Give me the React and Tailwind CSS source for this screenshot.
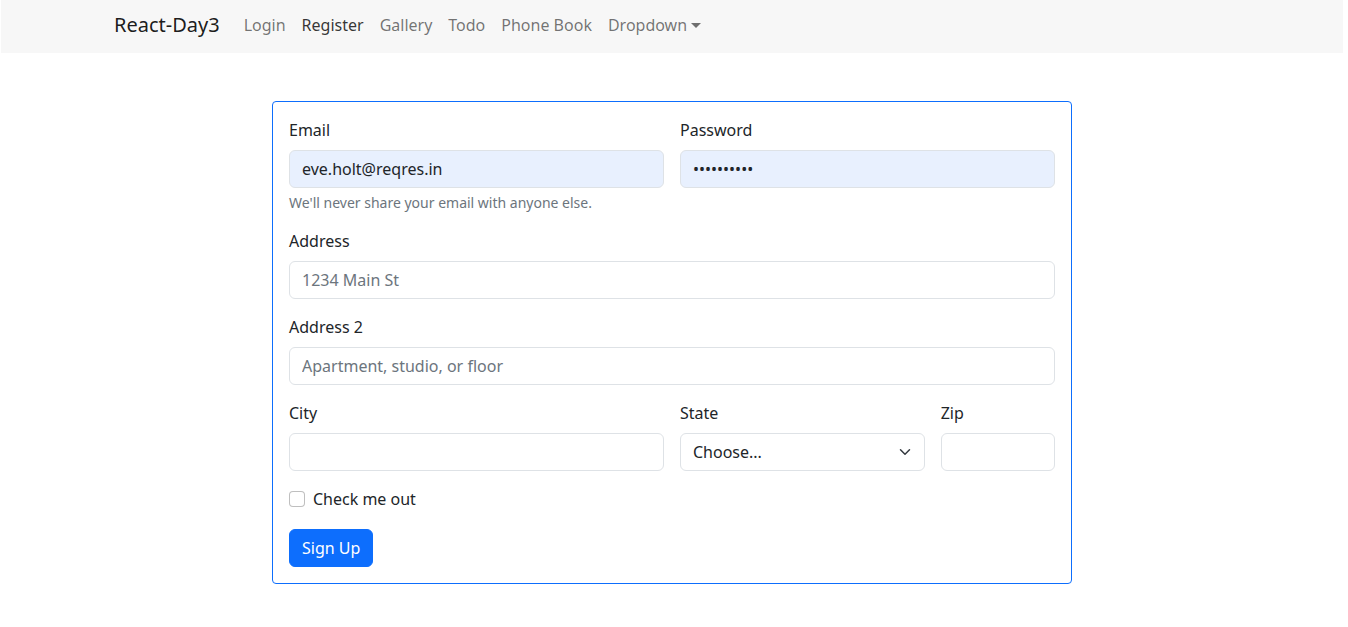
import React from "react";

function Label({ children }) {
  return <label className="mb-2 block text-[16px] leading-6 text-[#212529]">{children}</label>;
}

function Field({ span, label, children }) {
  return (
    <div className={span}>
      <Label>{label}</Label>
      {children}
    </div>
  );
}

const inputCls =
  "block h-[38px] w-full rounded-[6px] border border-[#dee2e6] px-3 text-[16px] leading-6 text-[#212529] outline-none placeholder:text-[#6c757d]";

export default function App() {
  return (
    <div className="w-[1344px] bg-white font-['Noto_Sans',sans-serif] text-[#212529]">
      <nav className="ml-px mr-px h-[53px] bg-[#f7f7f7]">
        <div className="mx-auto flex h-full w-[1140px] items-center px-3 pb-[3px]">
          <a className="mr-4 text-[20px] leading-[30px] text-[#000000e6]">React-Day3</a>
          <ul className="flex items-center text-[16px] leading-6">
            <li className="px-2 text-[#0000008c]">Login</li>
            <li className="px-2 text-[#000000cc]">Register</li>
            <li className="px-2 text-[#0000008c]">Gallery</li>
            <li className="px-2 text-[#0000008c]">Todo</li>
            <li className="px-2 text-[#0000008c]">Phone Book</li>
            <li className="flex items-center px-2 text-[#0000008c]">
              Dropdown
              <span className="ml-[4px] inline-block h-0 w-0 border-x-[5px] border-t-[5px] border-x-transparent border-t-[#0000008c]" />
            </li>
          </ul>
        </div>
      </nav>

      <form className="mx-auto mt-12 w-[800px] rounded-[4px] border border-[#0d6efd] p-4">
        <div className="grid grid-cols-12 gap-x-4 gap-y-4">
          <Field span="col-span-6" label="Email">
            <input
              type="email"
              readOnly
              value="eve.holt@reqres.in"
              className={inputCls + " bg-[#e8f0fe]"}
            />
            <div className="mt-1 text-[14px] leading-[21px] text-[#6c757d]">
              We'll never share your email with anyone else.
            </div>
          </Field>
          <Field span="col-span-6" label="Password">
            <input type="password" readOnly value="1234567890" className={inputCls + " bg-[#e8f0fe]"} />
          </Field>
          <Field span="col-span-12" label="Address">
            <input type="text" placeholder="1234 Main St" className={inputCls + " bg-white"} />
          </Field>
          <Field span="col-span-12" label="Address 2">
            <input type="text" placeholder="Apartment, studio, or floor" className={inputCls + " bg-white"} />
          </Field>
          <Field span="col-span-6" label="City">
            <input type="text" className={inputCls + " bg-white"} />
          </Field>
          <Field span="col-span-4" label="State">
            <div className="relative">
              <div className={inputCls + " flex items-center bg-white"}>Choose...</div>
              <svg
                className="absolute right-3 top-[13px] h-3 w-4"
                viewBox="0 0 16 16"
                fill="none"
                stroke="#343a40"
                strokeWidth="2"
                strokeLinecap="round"
                strokeLinejoin="round"
              >
                <path d="m2 5 6 6 6-6" />
              </svg>
            </div>
          </Field>
          <Field span="col-span-2" label="Zip">
            <input type="text" className={inputCls + " bg-white"} />
          </Field>
          <div className="col-span-12 mb-[2px] flex h-6 items-center">
            <span className="inline-block h-4 w-4 rounded-[4px] border border-[#00000040] bg-white" />
            <span className="ml-2 text-[16px] leading-6">Check me out</span>
          </div>
          <div className="col-span-12">
            <button
              type="button"
              className="h-[38px] rounded-[6px] border border-[#0d6efd] bg-[#0d6efd] px-3 text-[16px] leading-6 text-white"
            >
              Sign Up
            </button>
          </div>
        </div>
      </form>
    </div>
  );
}
